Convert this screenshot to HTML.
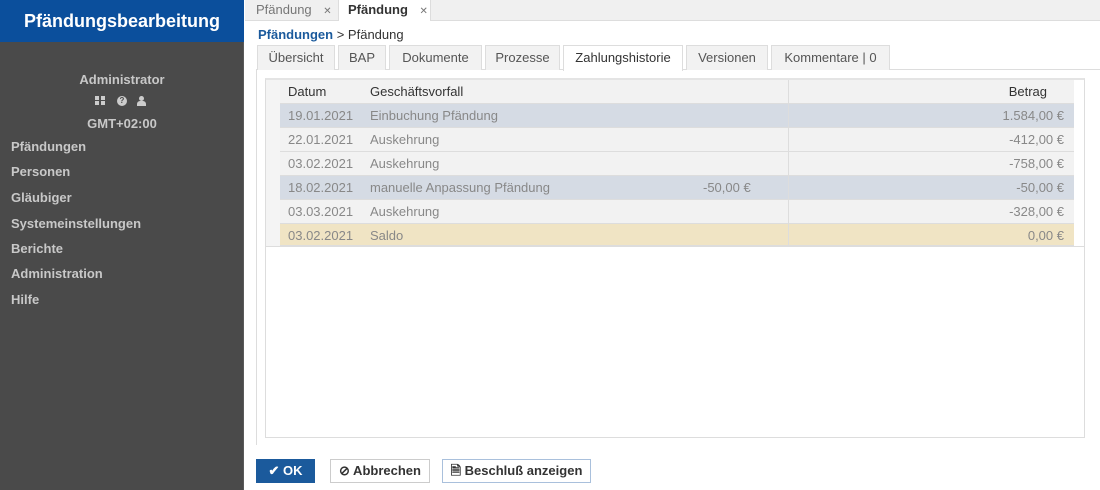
<!DOCTYPE html>
<html><head><meta charset="utf-8"><style>
*{margin:0;padding:0;box-sizing:border-box}
body{width:1100px;height:490px;overflow:hidden;font-family:"Liberation Sans",sans-serif;font-size:13px;background:#fff;position:relative}
.a{position:absolute}
#side{left:0;top:0;width:244px;height:490px;background:#4a4a4a;border-right:1px solid #5a5a5a}
#hdr{left:0;top:0;width:244px;height:42px;background:#0b4f9c;color:#fff;font-weight:bold;font-size:18px;text-align:center;line-height:42px}
.menu{left:11px;color:#c8c8c8;font-weight:bold;font-size:13px}
.tabs2{top:45px;height:25px;border:1px solid #ddd;border-bottom:none;background:#f2f2f2;color:#555;text-align:center;line-height:24px}
.row{left:280px;width:794px;height:24px;border-bottom:1px solid #ddd;color:#888;line-height:23px}
.row span{position:absolute}
.btn{top:459px;height:24px;border:1px solid #ccc;line-height:22px;text-align:center;font-weight:bold;color:#333}
</style></head><body>
<div id="side" class="a"></div>
<div id="hdr" class="a">Pfändungsbearbeitung</div>
<div class="a" style="left:0;width:244px;top:72px;text-align:center;color:#c8c8c8;font-weight:bold">Administrator</div>
<div class="a" style="left:95px;top:96px;width:10px;height:9px;background:#ccc;border:0"></div>
<div class="a" style="left:99px;top:96px;width:2px;height:9px;background:#4a4a4a"></div>
<div class="a" style="left:95px;top:100px;width:10px;height:1px;background:#4a4a4a"></div>
<div class="a" style="left:117px;top:96px;width:10px;height:10px;border-radius:50%;background:#ccc;font-size:8px;color:#4a4a4a;text-align:center;line-height:10px;font-weight:bold">?</div>
<div class="a" style="left:139px;top:96px;width:5px;height:5px;border-radius:50%;background:#ccc"></div>
<div class="a" style="left:137px;top:101px;width:9px;height:5px;border-radius:3px 3px 0 0;background:#ccc"></div>
<div class="a" style="left:0;width:244px;top:116px;text-align:center;color:#c8c8c8;font-weight:bold">GMT+02:00</div>
<div class="a menu" style="top:139px">Pfändungen</div>
<div class="a menu" style="top:164px">Personen</div>
<div class="a menu" style="top:190px">Gläubiger</div>
<div class="a menu" style="top:216px">Systemeinstellungen</div>
<div class="a menu" style="top:241px">Berichte</div>
<div class="a menu" style="top:266px">Administration</div>
<div class="a menu" style="top:292px">Hilfe</div>

<div class="a" style="left:245px;top:0;width:855px;height:21px;background:#f0f0f0;border-bottom:1px solid #ddd"></div>
<div class="a" style="left:256px;top:2px;color:#777">Pfändung <span style="font-size:10px;margin-left:8px">✕</span></div>
<div class="a" style="left:338px;top:0;width:93px;height:21px;background:#fff;border-left:1px solid #ddd;border-right:1px solid #ddd"></div>
<div class="a" style="left:348px;top:2px;color:#333;font-weight:bold">Pfändung <span style="font-size:10px;margin-left:8px;font-weight:normal;color:#777">✕</span></div>
<div class="a" style="left:258px;top:27px;color:#333"><span style="color:#1b5a9c;font-weight:bold">Pfändungen</span> &gt; Pfändung</div>

<div class="a" style="left:256px;top:69px;width:844px;height:1px;background:#ddd"></div>
<div class="a" style="left:256px;top:69px;width:1px;height:376px;background:#ddd"></div>
<div class="a tabs2" style="left:257px;width:78px">Übersicht</div>
<div class="a tabs2" style="left:338px;width:48px">BAP</div>
<div class="a tabs2" style="left:389px;width:93px">Dokumente</div>
<div class="a tabs2" style="left:485px;width:75px">Prozesse</div>
<div class="a tabs2" style="left:563px;width:120px;background:#fff;height:26px;color:#333">Zahlungshistorie</div>
<div class="a tabs2" style="left:686px;width:82px">Versionen</div>
<div class="a tabs2" style="left:771px;width:119px">Kommentare | 0</div>

<div class="a" style="left:265px;top:78px;width:820px;height:360px;border:1px solid #ddd;border-top:2px solid #e4e4e4"></div>
<div class="a" style="left:266px;top:80px;width:14px;height:166px;background:#f4f4f4"></div>
<div class="a" style="left:280px;top:80px;width:794px;height:24px;background:#f2f2f2;border-bottom:1px solid #ddd;color:#333;line-height:23px"><span class="a" style="left:8px">Datum</span><span class="a" style="left:90px">Geschäftsvorfall</span><span class="a" style="right:27px">Betrag</span></div>
<div class="a row" style="top:104px;background:#d5dbe4"><span style="left:8px">19.01.2021</span><span style="left:90px">Einbuchung Pfändung</span><span style="right:10px">1.584,00 €</span></div>
<div class="a row" style="top:128px;background:#f2f2f2"><span style="left:8px">22.01.2021</span><span style="left:90px">Auskehrung</span><span style="right:10px">-412,00 €</span></div>
<div class="a row" style="top:152px;background:#f2f2f2"><span style="left:8px">03.02.2021</span><span style="left:90px">Auskehrung</span><span style="right:10px">-758,00 €</span></div>
<div class="a row" style="top:176px;background:#d5dbe4"><span style="left:8px">18.02.2021</span><span style="left:90px">manuelle Anpassung Pfändung</span><span style="left:423px">-50,00 €</span><span style="right:10px">-50,00 €</span></div>
<div class="a row" style="top:200px;background:#f2f2f2"><span style="left:8px">03.03.2021</span><span style="left:90px">Auskehrung</span><span style="right:10px">-328,00 €</span></div>
<div class="a row" style="top:224px;height:22px;background:#f0e4c4"><span style="left:8px">03.02.2021</span><span style="left:90px">Saldo</span><span style="right:10px">0,00 €</span></div>
<div class="a" style="left:788px;top:80px;width:1px;height:166px;background:#ddd"></div>
<div class="a" style="left:266px;top:246px;width:818px;height:1px;background:#ddd"></div>

<div class="a btn" style="left:256px;width:59px;background:#1b5a9c;border-color:#1b5a9c;color:#fff">✔ OK</div>
<div class="a btn" style="left:330px;width:100px;background:#fff">⊘ Abbrechen</div>
<div class="a btn" style="left:442px;width:149px;background:#fff;border-color:#a9c0dc">🗎 Beschluß anzeigen</div>
</body></html>
